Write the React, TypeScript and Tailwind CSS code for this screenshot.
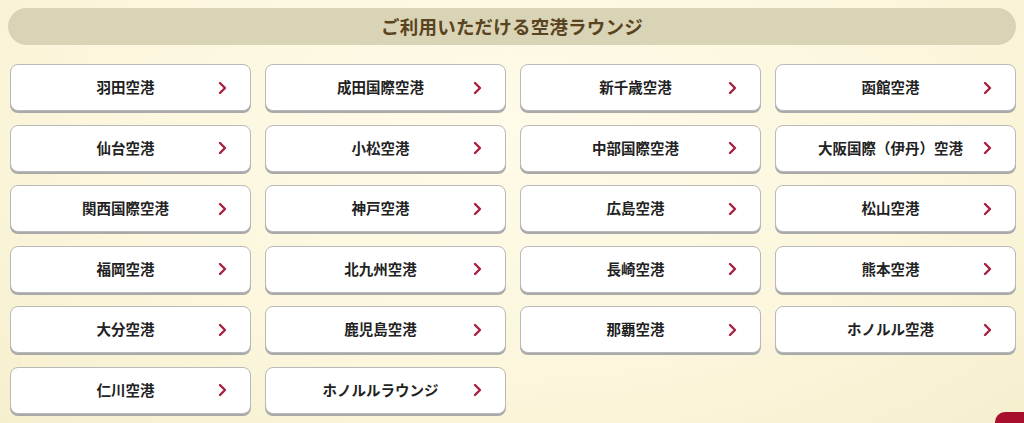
const airports = [
  "羽田空港",
  "成田国際空港",
  "新千歳空港",
  "函館空港",
  "仙台空港",
  "小松空港",
  "中部国際空港",
  "大阪国際（伊丹）空港",
  "関西国際空港",
  "神戸空港",
  "広島空港",
  "松山空港",
  "福岡空港",
  "北九州空港",
  "長崎空港",
  "熊本空港",
  "大分空港",
  "鹿児島空港",
  "那覇空港",
  "ホノルル空港",
  "仁川空港",
  "ホノルルラウンジ",
];

function Chevron() {
  return (
    <svg width="9" height="13" viewBox="0 0 9 13" className="flex-shrink-0">
      <path d="M2 1.5 L7 6.5 L2 11.5" fill="none" stroke="#a8203e" strokeWidth="2.4" strokeLinecap="round" strokeLinejoin="round" />
    </svg>
  );
}

export default function App() {
  return (
    <div
      className="relative w-[1024px] h-[423px] overflow-hidden bg-[radial-gradient(ellipse_at_50%_30%,#fffbe9_0%,#fbf6dc_60%,#f6efce_100%)]"
      style={{ fontFamily: '"Noto Sans CJK JP", "Noto Sans", sans-serif' }}
    >
      <div className="pt-[8px] px-[8px]">
        <div className="h-[37px] rounded-full bg-[#d9d4b5] flex items-center justify-center">
          <p className="text-[18.5px] font-bold text-[#5a4321] tracking-[0.2px]">ご利用いただける空港ラウンジ</p>
        </div>
      </div>

      <div className="grid grid-cols-4 gap-x-[14px] gap-y-[13.5px] pl-[10px] pr-[8px] mt-[19px]">
        {airports.map((name) => (
          <a
            key={name}
            className="relative h-[47px] bg-white border border-[#b9b9b9] rounded-[8px] shadow-[0_2px_0_#a9a9a9] flex items-center justify-center pr-[10px]"
          >
            <span className="text-[14.5px] font-bold text-[#222] leading-none">{name}</span>
            <span className="absolute right-[23px] top-1/2 -translate-y-1/2 flex">
              <Chevron />
            </span>
          </a>
        ))}
      </div>

      <div className="absolute left-[995px] top-[412px] w-[60px] h-[60px] rounded-[10px] bg-[#a80f2d]" />
    </div>
  );
}
